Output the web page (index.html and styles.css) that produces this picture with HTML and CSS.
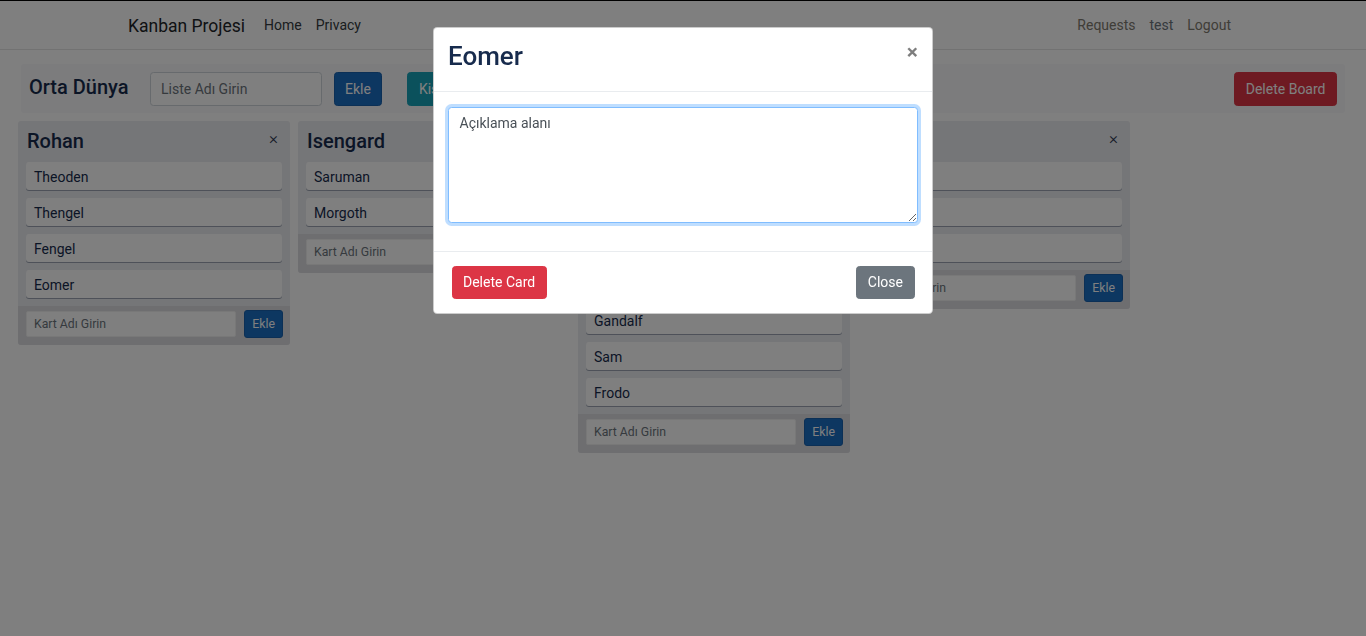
FILE: index.html
```html
<!DOCTYPE html>
<html lang="tr">
<head>
<meta charset="utf-8">
<title>Kanban Projesi</title>
<link rel="stylesheet" href="styles.css">
</head>
<body>
<header class="navbar">
  <div class="nav-container">
    <a class="brand" href="#">Kanban Projesi</a>
    <ul class="nav-menu nav-left">
      <li><a class="nav-link" href="#">Home</a></li>
      <li><a class="nav-link" href="#">Privacy</a></li>
    </ul>
    <ul class="nav-menu">
      <li><a class="nav-link nav-link-muted" href="#">Requests</a></li>
      <li><span class="nav-link nav-user">test</span></li>
      <li><a class="nav-link nav-link-muted" href="#">Logout</a></li>
    </ul>
  </div>
</header>

<main class="page">
  <div class="board-bar">
    <h5 class="board-title">Orta Dünya</h5>
    <input class="field" type="text" placeholder="Liste Adı Girin">
    <button class="btn btn-primary btn-add-list">Ekle</button>
    <button class="btn btn-info btn-people">Kişiler</button>
    <button class="btn btn-danger btn-delete-board">Delete Board</button>
  </div>

  <div class="lists">
    <section class="list">
      <div class="list-head"><h4 class="list-title">Rohan</h4><span class="list-close">×</span></div>
      <div class="cards">
        <div class="card">Theoden</div>
        <div class="card">Thengel</div>
        <div class="card">Fengel</div>
        <div class="card">Eomer</div>
      </div>
      <div class="add-form"><input class="field-sm" type="text" placeholder="Kart Adı Girin"><button class="btn btn-primary btn-sm">Ekle</button></div>
    </section>

    <section class="list">
      <div class="list-head"><h4 class="list-title">Isengard</h4><span class="list-close">×</span></div>
      <div class="cards">
        <div class="card">Saruman</div>
        <div class="card">Morgoth</div>
      </div>
      <div class="add-form"><input class="field-sm" type="text" placeholder="Kart Adı Girin"><button class="btn btn-primary btn-sm">Ekle</button></div>
    </section>

    <section class="list">
      <div class="list-head"><h4 class="list-title">Yüzük Kardeşliği</h4><span class="list-close">×</span></div>
      <div class="cards">
        <div class="card">Aragorn</div>
        <div class="card">Legolas</div>
        <div class="card">Gimli</div>
        <div class="card">Boromir</div>
        <div class="card">Gandalf</div>
        <div class="card">Sam</div>
        <div class="card">Frodo</div>
      </div>
      <div class="add-form"><input class="field-sm" type="text" placeholder="Kart Adı Girin"><button class="btn btn-primary btn-sm">Ekle</button></div>
    </section>

    <section class="list">
      <div class="list-head"><h4 class="list-title">Mordor</h4><span class="list-close">×</span></div>
      <div class="cards">
        <div class="card">Sauron</div>
        <div class="card">Nazgul</div>
        <div class="card">Gollum</div>
      </div>
      <div class="add-form"><input class="field-sm" type="text" placeholder="Kart Adı Girin"><button class="btn btn-primary btn-sm">Ekle</button></div>
    </section>
  </div>
</main>

<div class="backdrop"></div>
<div class="modal">
  <div class="modal-dialog">
    <div class="modal-content">
      <div class="modal-header">
        <h3 class="modal-title">Eomer</h3>
        <button class="close" type="button">×</button>
      </div>
      <div class="modal-body">
        <textarea class="textarea" rows="5">Açıklama alanı</textarea>
      </div>
      <div class="modal-footer">
        <button class="btn btn-danger">Delete Card</button>
        <button class="btn btn-secondary">Close</button>
      </div>
    </div>
  </div>
</div>
</body>
</html>
```
FILE: styles.css
```css
html { font-size: 14px; }
body {
  margin: 0;
  font-family: Roboto, "Liberation Sans", sans-serif;
  font-size: 14px;
  line-height: 1.5;
  color: #212529;
  background: #fff;
}

/* navbar */
.navbar {
  height: 50px;
  box-sizing: border-box;
  border-top: 1px solid #000;
  border-bottom: 1px solid #e5e5e5;
  background: #fff;
  margin-bottom: 14px;
}
.nav-container {
  width: 1140px;
  height: 100%;
  margin: 0 auto;
  padding: 1px 15px 0;
  box-sizing: border-box;
  display: flex;
  align-items: center;
}
.brand {
  font-size: 17.5px;
  line-height: 26px;
  color: #212529;
  text-decoration: none;
  margin-right: 12px;
}
.nav-menu { display: flex; list-style: none; margin: 0; padding: 0; }
.nav-left { flex: 1; }
.nav-link {
  display: block;
  padding: 7px;
  color: #343a40;
  text-decoration: none;
}
.nav-link-muted { color: #7f7a70; }
.nav-user { color: #6c757d; }

/* board */
.page { padding: 0 18px; }
.board-bar {
  display: flex;
  align-items: center;
  height: 49px;
  box-sizing: border-box;
  margin: 0 3px;
  padding: 1px 8px 0;
  background: #f8f9fa;
  border-radius: 3px;
}
.board-title {
  margin: 0 21px 5px 0;
  font-size: 20px;
  font-weight: 500;
  line-height: 1.2;
  color: #172b4d;
}
.field {
  width: 172px;
  height: 33.5px;
  box-sizing: border-box;
  padding: 5.25px 10.5px;
  font: inherit;
  color: #495057;
  border: 1px solid #ced4da;
  border-radius: 3.5px;
  background: #fff;
}
.field::placeholder, .field-sm::placeholder { color: #6c757d; }

.btn {
  display: inline-block;
  font-family: inherit;
  font-size: 14px;
  line-height: 1.5;
  padding: 5.25px 10.5px;
  border: 1px solid transparent;
  border-radius: 3.5px;
  color: #fff;
  cursor: pointer;
}
.btn-primary { background: #1b6ec2; border-color: #1861ac; }
.btn-info { background: #17a2b8; border-color: #17a2b8; }
.btn-danger { background: #dc3545; border-color: #dc3545; }
.btn-secondary { background: #6c757d; border-color: #6c757d; }
.btn-sm { font-size: 12.25px; padding: 3.5px 7px; line-height: 1.5; border-radius: 3px; height: 28px; }
.btn-add-list { margin-left: 12px; }
.btn-people { margin-left: 25px; }
.btn-delete-board { margin-left: auto; }

/* lists */
.lists {
  display: flex;
  align-items: flex-start;
  gap: 8px;
  margin-top: 8px;
}
.list {
  width: 272px;
  background: #ebecf0;
  border-radius: 3px;
  overflow: hidden;
}
.list-head {
  height: 41px;
  display: flex;
  align-items: center;
  justify-content: space-between;
  padding: 0 12px 1px 9px;
  box-sizing: border-box;
}
.list-title {
  margin: 0;
  font-size: 20px;
  font-weight: 500;
  line-height: 1.2;
  color: #172b4d;
}
.list-close {
  font-size: 17px;
  font-weight: 300;
  color: #2a3550;
  line-height: 1;
  margin-bottom: 5px;
}
.cards {
  display: flex;
  flex-direction: column;
  gap: 8px;
  padding: 0 8px;
}
.card {
  height: 28px;
  box-sizing: border-box;
  display: flex;
  align-items: center;
  padding: 3px 8px 0;
  background: #fff;
  border-radius: 3px;
  box-shadow: 0 1px 0 rgba(9, 30, 66, 0.35);
  color: #172b4d;
}
.add-form {
  margin-top: 8px;
  display: flex;
  align-items: center;
  gap: 8px;
  padding: 4px 7px 7px 8px;
  background: #dcdde1;
}
.field-sm {
  width: 211px;
  height: 26px;
  box-sizing: border-box;
  padding: 0 7px;
  font-family: inherit;
  font-size: 12.25px;
  border: 1px solid #f1f1f1;
  border-radius: 2px;
  background: #fff;
}

/* modal */
.backdrop {
  position: fixed;
  inset: 0;
  background: rgba(0, 0, 0, 0.5);
  z-index: 10;
}
.modal {
  position: fixed;
  inset: 0;
  z-index: 20;
}
.modal-dialog {
  max-width: 500px;
  margin: 27px auto;
}
.modal-content {
  background: #fff;
  border: 1px solid rgba(0, 0, 0, 0.2);
  border-radius: 4.2px;
}
.modal-header {
  display: flex;
  align-items: flex-start;
  justify-content: space-between;
  padding: 13px 14px 19px;
  border-bottom: 1px solid #e9ecef;
}
.modal-title {
  margin: 0;
  font-size: 26px;
  font-weight: 500;
  line-height: 1.2;
  color: #172b4d;
}
.close {
  padding: 14px;
  margin: -13px -14px -14px auto;
  background: none;
  border: 0;
  font-family: inherit;
  font-size: 21px;
  font-weight: 700;
  line-height: 1;
  color: #000;
  text-shadow: 0 1px 0 #fff;
  opacity: 0.5;
}
.modal-body { padding: 15px 14px 14px; }
.textarea {
  display: block;
  width: 100%;
  height: 116px;
  box-sizing: border-box;
  margin-bottom: 14px;
  padding: 5.25px 10.5px;
  font-family: inherit;
  font-size: 14px;
  line-height: 1.5;
  color: #495057;
  border: 1px solid #80bdff;
  border-radius: 3.5px;
  box-shadow: 0 0 0 3px rgba(0, 123, 255, 0.25);
  outline: none;
  resize: vertical;
}
.modal-footer {
  display: flex;
  align-items: center;
  justify-content: space-between;
  padding: 10px 14px 10.5px;
  border-top: 1px solid #e9ecef;
}
.modal-footer .btn { margin: 3.5px; }
```
